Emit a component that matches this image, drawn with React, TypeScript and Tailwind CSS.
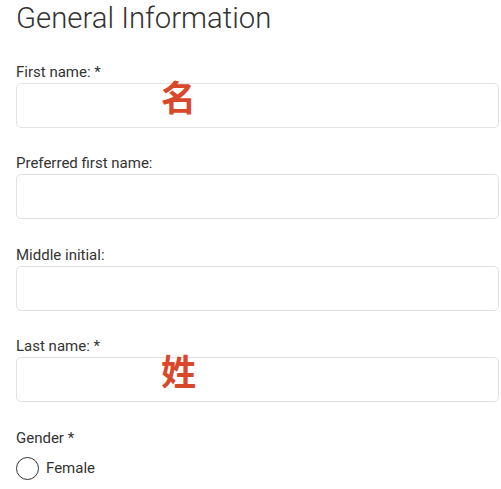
import React from "react";

type Field = { label: string; mark?: string };

const fields: Field[] = [
    { label: "First name: *", mark: "名" },
    { label: "Preferred first name:" },
    { label: "Middle initial:" },
    { label: "Last name: *", mark: "姓" },
];

function TextField({ label, mark }: Field) {
    return (
        <div className="relative flex flex-col">
            <label className="text-[15px] leading-5 text-[#333] mb-[1px]">{label}</label>
            <input
                type="text"
                className="h-[45px] w-full rounded-[5px] border border-[#e2e2e2] bg-white outline-none"
            />
            {mark && (
                <span className="pointer-events-none absolute left-[145px] top-[16px] text-[35px] font-bold leading-none text-[#d9482a] [font-family:'Noto_Sans_CJK_SC',sans-serif]">
                    {mark}
                </span>
            )}
        </div>
    );
}

export default function App() {
    return (
        <div className="min-h-screen bg-white pl-4 pr-[2px] text-[#333] [font-family:Roboto,'Liberation_Sans',sans-serif]">
            <h1 className="text-[29.3px] font-light leading-[34px] text-[#333] pt-px">General Information</h1>
            <div className="mt-[27px] flex flex-col gap-[25.4px]">
                {fields.map((f) => (
                    <TextField key={f.label} {...f} />
                ))}
                <div className="flex flex-col">
                    <span className="text-[15px] leading-5 text-[#333]">Gender *</span>
                    <label className="mt-[9px] flex items-center gap-[7px]">
                        <span className="h-[23px] w-[23px] rounded-full border border-[#333] bg-white" />
                        <span className="text-[15px] text-[#333]">Female</span>
                    </label>
                </div>
            </div>
        </div>
    );
}
